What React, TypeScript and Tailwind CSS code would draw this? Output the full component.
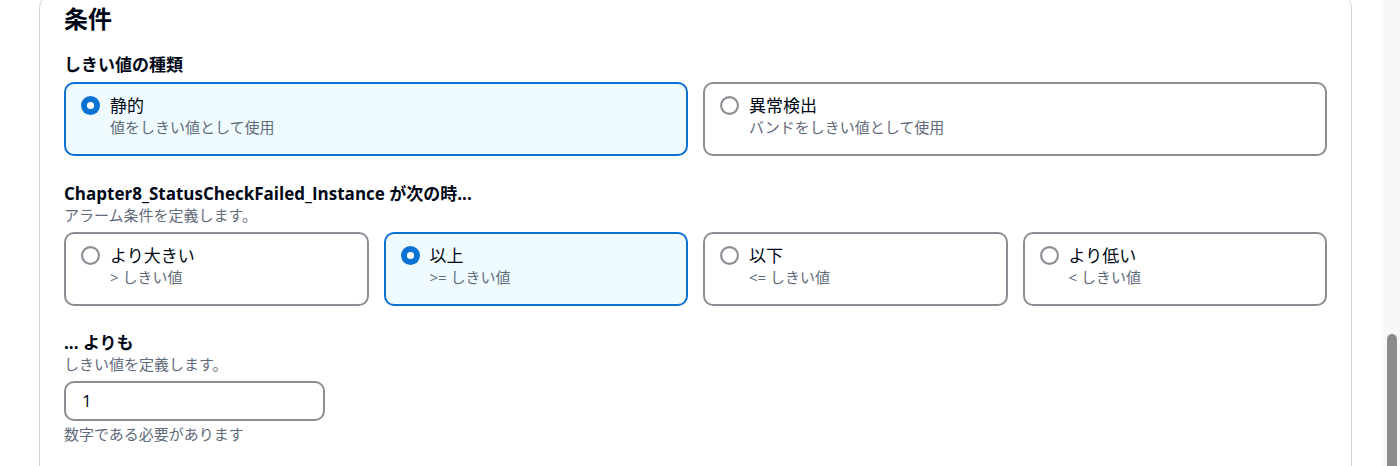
import React from "react";

const FONT = { fontFamily: '"Open Sans", "Noto Sans CJK JP", sans-serif' };

function Radio({ checked }: { checked: boolean }) {
  return (
    <svg width="19" height="19" viewBox="0 0 19 19" className="shrink-0">
      {checked ? (
        <>
          <circle cx="9.5" cy="9.5" r="9.5" fill="#0972d3" />
          <circle cx="9.5" cy="9.5" r="3.6" fill="#ffffff" />
        </>
      ) : (
        <circle cx="9.5" cy="9.5" r="8.4" fill="#ffffff" stroke="#8c8c94" strokeWidth="2.1" />
      )}
    </svg>
  );
}

function Tile({ label, desc, checked }: { label: string; desc: string; checked: boolean }) {
  return (
    <div
      className={
        checked
          ? "flex items-start gap-[10px] rounded-[10px] border-2 border-[#0972d3] bg-[#f0fbff] pl-[15px] pr-[16px] pt-[10px] pb-[16px]"
          : "flex items-start gap-[10px] rounded-[10px] border-2 border-[#8c8c94] bg-white pl-[15px] pr-[16px] pt-[10px] pb-[16px]"
      }
    >
      <div className="flex h-[23px] items-center">
        <Radio checked={checked} />
      </div>
      <div className="flex flex-col">
        <span className="text-[17px] leading-[23px] text-[#000716]">{label}</span>
        <span className="text-[15px] leading-[21px] text-[#5f6b7a]">{desc}</span>
      </div>
    </div>
  );
}

export default function App() {
  return (
    <div className="flex h-[466px] w-[1400px] overflow-hidden bg-white" style={FONT}>
      <main className="flex-1 pl-[39px] pr-[31px]">
        <section className="-mt-[8px] rounded-[16px] border border-[#d5d5da] px-[24px] pt-[11px] pb-[40px]">
          <h2 className="text-[24px] font-bold leading-[30px] text-[#000716]">条件</h2>

          <div className="mt-[19px] text-[17px] font-bold leading-[23px] text-[#000716]">しきい値の種類</div>
          <div className="mt-[6px] grid grid-cols-2 gap-[15px]">
            <Tile label="静的" desc="値をしきい値として使用" checked={true} />
            <Tile label="異常検出" desc="バンドをしきい値として使用" checked={false} />
          </div>

          <div className="mt-[26px] text-[17px] font-bold leading-[23px] text-[#000716]">
            Chapter8_StatusCheckFailed_Instance が次の時...
          </div>
          <div className="text-[15px] leading-[21px] text-[#5f6b7a]">アラーム条件を定義します。</div>
          <div className="mt-[6px] grid grid-cols-4 gap-[15px]">
            <Tile label="より大きい" desc="> しきい値" checked={false} />
            <Tile label="以上" desc=">= しきい値" checked={true} />
            <Tile label="以下" desc="<= しきい値" checked={false} />
            <Tile label="より低い" desc="< しきい値" checked={false} />
          </div>

          <div className="mt-[25px] text-[17px] font-bold leading-[23px] text-[#000716]">... よりも</div>
          <div className="text-[15px] leading-[21px] text-[#5f6b7a]">しきい値を定義します。</div>
          <div className="mt-[6px] flex h-[40px] w-[261px] items-center rounded-[10px] border-2 border-[#8c8c94] bg-white px-[16px] text-[17px] text-[#000716]">
            1
          </div>
          <div className="mt-[3px] text-[15px] leading-[21px] text-[#5f6b7a]">数字である必要があります</div>
        </section>
      </main>
      <div className="flex h-full w-[17px] justify-center bg-[#f8f8f8]">
        <div className="mt-[334px] h-[200px] w-[10px] rounded-full bg-[#8b8b8b]" />
      </div>
    </div>
  );
}
